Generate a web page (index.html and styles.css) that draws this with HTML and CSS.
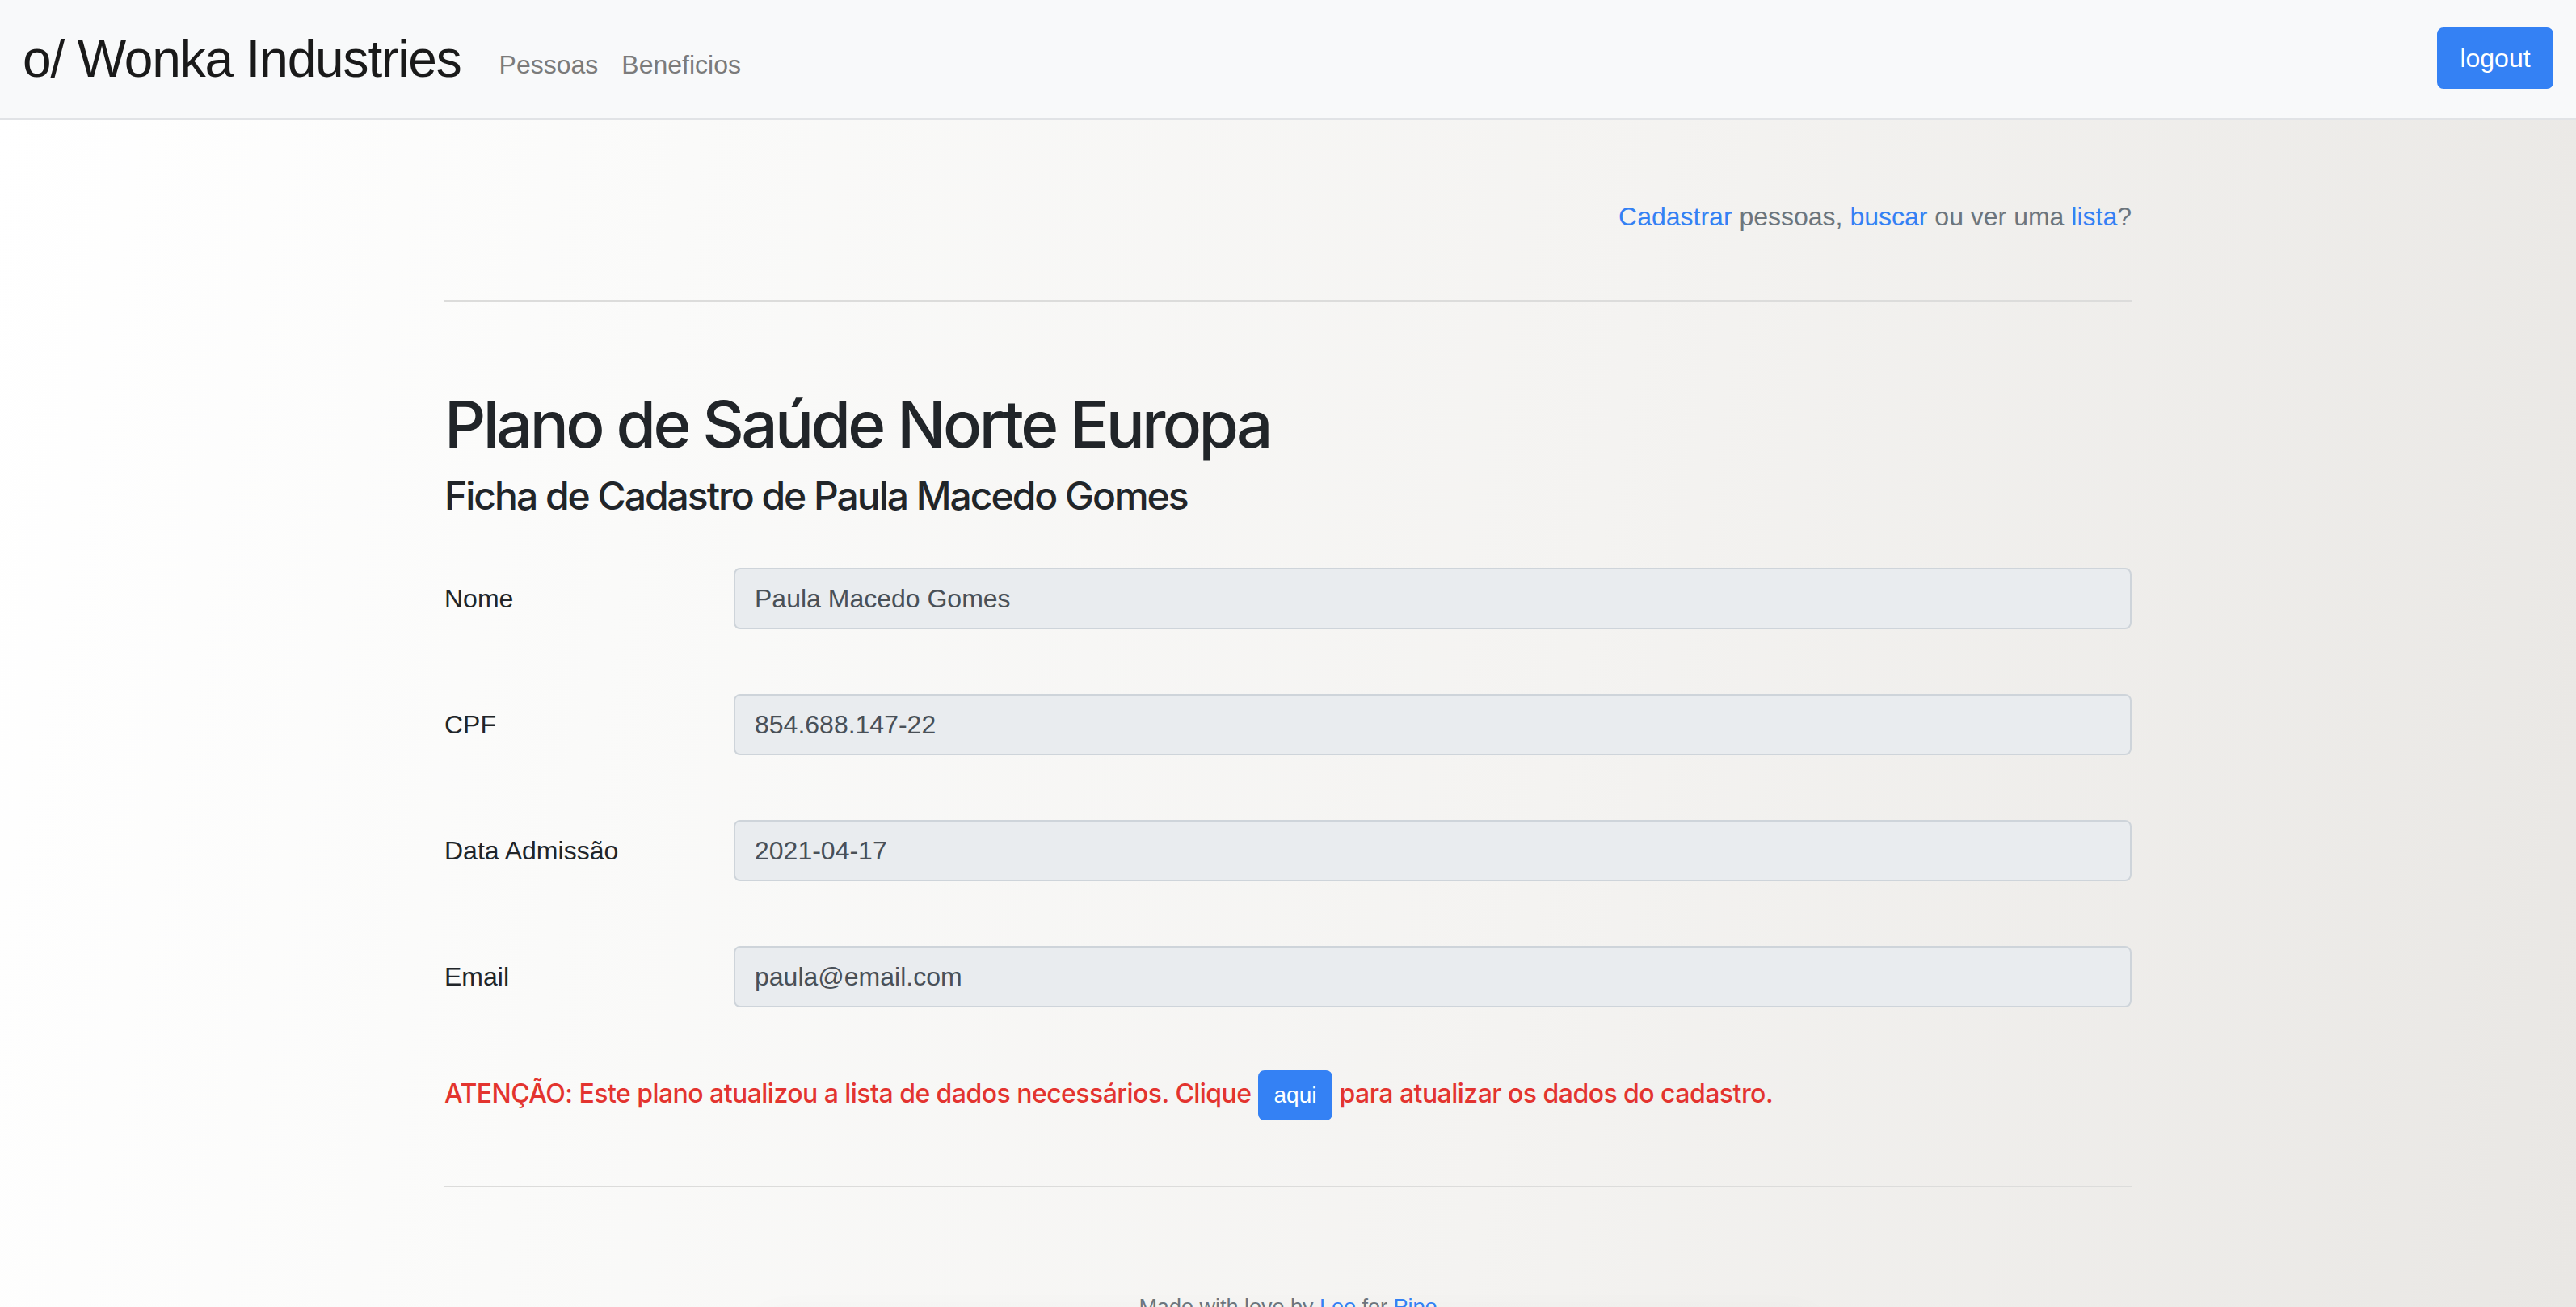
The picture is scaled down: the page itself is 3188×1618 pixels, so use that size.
FILE: index.html
```html
<!DOCTYPE html>
<html lang="pt-BR">
<head>
<meta charset="utf-8">
<title>Wonka Industries</title>
<link rel="stylesheet" href="styles.css">
</head>
<body>
<nav class="navbar">
  <a class="brand" href="#">o/ Wonka Industries</a>
  <div class="nav-links">
    <a class="nav-link" href="#">Pessoas</a>
    <a class="nav-link" href="#">Beneficios</a>
  </div>
  <button class="btn btn-logout">logout</button>
</nav>
<main class="page">
  <div class="container">
    <p class="top-links"><a href="#">Cadastrar</a> pessoas, <a href="#">buscar</a> ou ver uma <a href="#">lista</a>?</p>
    <hr class="rule rule-top">
    <h1 class="title">Plano de Saúde Norte Europa</h1>
    <h4 class="subtitle">Ficha de Cadastro de Paula Macedo Gomes</h4>
    <form class="form">
      <div class="form-row">
        <label class="form-label">Nome</label>
        <div class="form-field"><input class="form-control" type="text" value="Paula Macedo Gomes" readonly></div>
      </div>
      <div class="form-row">
        <label class="form-label">CPF</label>
        <div class="form-field"><input class="form-control" type="text" value="854.688.147-22" readonly></div>
      </div>
      <div class="form-row">
        <label class="form-label">Data Admissão</label>
        <div class="form-field"><input class="form-control" type="text" value="2021-04-17" readonly></div>
      </div>
      <div class="form-row">
        <label class="form-label">Email</label>
        <div class="form-field"><input class="form-control" type="text" value="paula@email.com" readonly></div>
      </div>
    </form>
    <p class="alert-text">ATENÇÃO: Este plano atualizou a lista de dados necessários. Clique <a class="btn btn-sm" href="#">aqui</a> para atualizar os dados do cadastro.</p>
    <hr class="rule rule-bottom">
    <footer class="footer">
      <p class="footer-text">Made with love by <a href="#">Leo</a> for <a href="#">Pipo</a></p>
      <div class="footer-bar"></div>
    </footer>
  </div>
</main>
</body>
</html>
```

FILE: styles.css
```css
* { box-sizing: border-box; }
html, body { margin: 0; padding: 0; }
body {
  font-family: "Liberation Sans", Arial, sans-serif;
  font-size: 32px;
  line-height: 1.5;
  color: #212529;
  background: #fafaf9;
  height: 1618px;
  overflow: hidden;
}
a { color: #3481f4; text-decoration: none; }

.navbar {
  display: flex;
  align-items: center;
  height: 148px;
  padding: 0 28px 0 28px;
  background: #f8f9fa;
  border-bottom: 2px solid #e1e3e6;
}
.brand {
  font-size: 64px;
  line-height: 96px;
  color: #1a1a1a;
  letter-spacing: -0.018em;
  margin-right: 31px;
}
.nav-links {
  display: flex;
  flex: 1;
  margin-top: 14px;
}
.nav-link {
  color: #7b7b7b;
  padding: 0 16px;
  font-size: 32px;
}
.nav-link + .nav-link { margin-left: -3px; }
.btn {
  display: inline-block;
  background: #3481f4;
  color: #fff;
  border: 2px solid #3481f4;
  border-radius: 8px;
  font-family: inherit;
}
.btn-logout {
  font-size: 32px;
  line-height: 48px;
  padding: 12px 24px;
  width: 144px;
  margin-top: -3px;
}

.page {
  height: 1470px;
  background: linear-gradient(100deg, #ffffff 0%, #fafaf9 25%, #f4f3f1 60%, #e9e7e4 100%);
  overflow: hidden;
}
.container {
  width: 2088px;
  margin: 0 auto;
  padding-top: 96px;
}
.top-links {
  margin: 0;
  text-align: right;
  color: #6c757d;
  font-size: 32px;
  line-height: 48px;
}
.rule {
  border: 0;
  height: 2px;
  background: #dcdcdb;
  margin: 0;
}
.rule-top { margin-top: 80px; }
.title {
  margin: 103px 0 0;
  font-family: Inter, "Liberation Sans", sans-serif;
  font-size: 80px;
  line-height: 96px;
  font-weight: 500;
  letter-spacing: -0.046em;
}
.subtitle {
  margin: 12px 0 0;
  font-family: Inter, "Liberation Sans", sans-serif;
  font-size: 48px;
  line-height: 58px;
  font-weight: 500;
  letter-spacing: -0.042em;
}
.form { margin-top: 60px; }
.form-row {
  display: grid;
  grid-template-columns: 358px 1fr;
  margin: 0 -30px 80px;
  align-items: center;
}
.form-row:last-child { margin-bottom: 0; }
.form-label, .form-field { padding: 0 30px; }
.form-label { font-size: 32px; color: #212529; }
.form-control {
  display: block;
  width: 100%;
  height: 76px;
  padding: 12px 24px;
  font-family: inherit;
  font-size: 32px;
  line-height: 48px;
  color: #495057;
  background: #e9ecef;
  border: 2px solid #ced4da;
  border-radius: 8px;
  outline: none;
}
.alert-text {
  margin: 76px 0 0;
  font-family: Inter, "Liberation Sans", sans-serif;
  color: #e3342f;
  font-weight: 500;
  font-size: 32px;
  line-height: 62px;
  letter-spacing: -0.017em;
}
.btn-sm {
  font-family: "Liberation Sans", Arial, sans-serif;
  font-size: 28px;
  line-height: 42px;
  padding: 8px 18px;
  vertical-align: middle;
  font-weight: 400;
  color: #fff;
  letter-spacing: 0;
}
.rule-bottom { margin-top: 81px; }
.footer {
  margin: 127px auto 0;
  width: 1260px;
}
.footer-text {
  margin: 0;
  text-align: center;
  color: #6c757d;
  font-size: 27px;
  line-height: 42px;
}
.footer-bar {
  height: 60px;
  margin-top: 20px;
  box-shadow: 0 0 50px 16px rgba(0,0,0,0.08);
}
```
